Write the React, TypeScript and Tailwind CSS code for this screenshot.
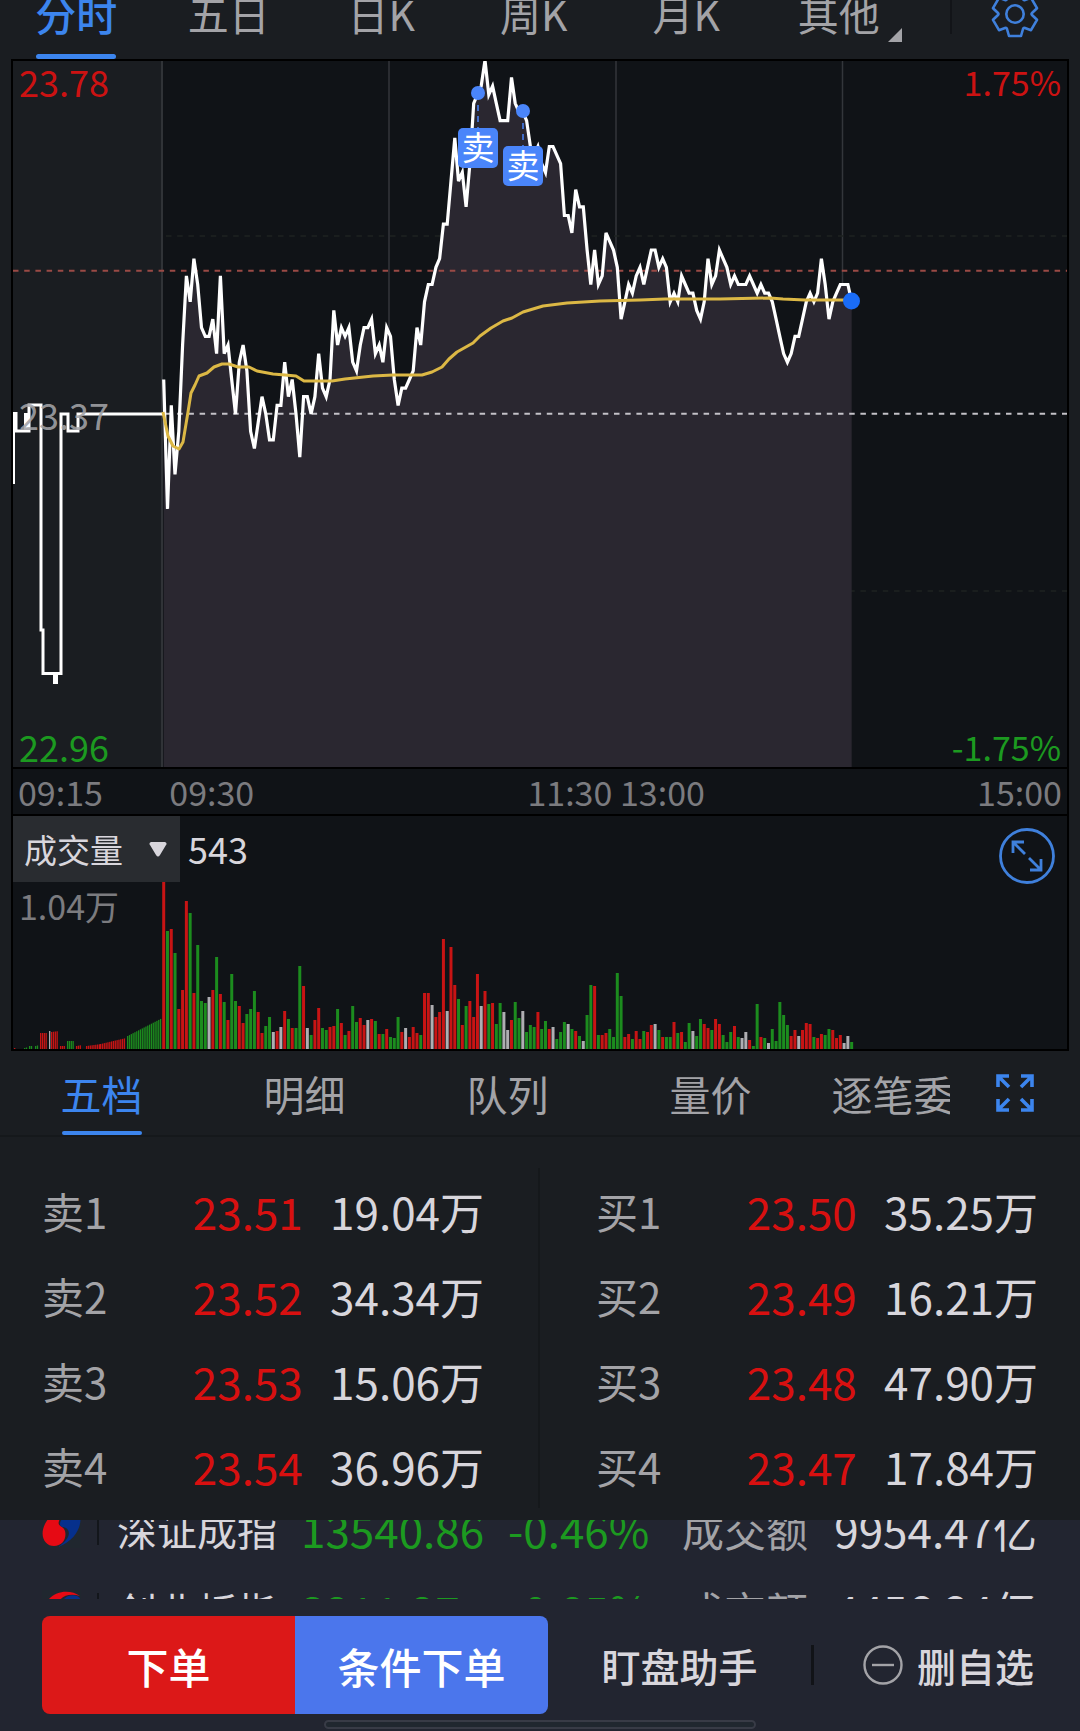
import { useState } from "react";
import clsx from "clsx";

const OPEN_X = 163.7;
const MINUTE = 3.78;
const BASE_Y = 414;
const TICK = 8.63;

// Price per minute since 09:30, in ticks of 0.01 from yesterday's close (23.37)
const ticks = [
	4, -11, 1, -7, -2, 8, 16, 13, 18, 15, 10, 9, 9, 11, 7, 16, 7, 8, 4, 0,
	6, 8, 5, -2, -4, -1, 2, 0, -3, -3, 1, 1, 6, 2, 4, 0, -5, 2, 2, 0,
	2, 7, 3, 2, 4, 12, 8, 10, 9, 10, 6, 5, 8, 10, 10, 11, 7, 8, 6, 10,
	9, 4, 1, 3, 3, 4, 5, 10, 8, 13, 15, 15, 17, 18, 22, 22, 27, 32, 27, 28,
	24, 29, 36, 37, 38, 41, 37, 38, 36, 34, 34, 34, 39, 36, 35, 35, 34, 31, 30, 31,
	29, 28, 31, 31, 30, 29, 23, 23, 21, 26, 24, 24, 19, 15, 19, 15, 16, 21, 20, 19,
	17, 11, 13, 15, 14, 16, 17, 15, 17, 19, 19, 17, 18, 17, 13, 14, 13, 16, 15, 14,
	14, 12, 11, 13, 18, 15, 16, 19, 18, 17, 15, 16, 15, 15, 15, 16, 15, 14, 15, 14,
	14, 13, 11, 9, 7, 6, 7, 9, 9, 11, 13, 14, 13, 14, 18, 15, 11, 13, 14, 15,
	15, 15, 13,
];

// Volume per minute: r = up, g = down, w = flat
const volumes =
	"r167 g118 r120 g96 r40 r59 r148 g136 r56 g104 g48 g46 w52 r59 g92 r55 g47 r29 g75 g48 " +
	"r43 r26 g35 g40 g58 r37 r16 g23 g32 w17 r18 w22 r38 g30 r21 g21 g83 r63 w21 g14 " +
	"r29 r41 g21 g19 r22 r23 g40 r26 g14 r18 g43 g27 r31 r24 w29 r30 g28 r15 g15 r20 " +
	"g12 g11 g32 r17 w21 r12 r22 r16 g14 r56 r56 w44 r32 r37 r110 w38 r102 r64 g50 r24 " +
	"g43 r48 r32 r75 w43 r58 g45 r46 g25 g46 w37 w19 r29 g47 g31 w38 g17 g24 g22 r37 " +
	"g20 g28 r20 w22 g10 g17 g27 w25 g20 r18 g13 w8 g34 g64 r63 g14 r14 r16 g20 g12 " +
	"g76 g53 r12 r15 g10 r18 r10 g18 r17 r24 w25 g19 r12 g12 g12 r27 g16 r17 g7 g26 " +
	"w18 g13 g30 r25 r21 g19 r30 r25 g14 g7 g17 r23 g12 w11 w17 r9 g3 g45 r12 g11 " +
	"w6 g20 g8 g47 g34 g24 r13 r19 w13 r19 r26 r25 g12 r11 r15 g14 g20 r19 r11 r14 " +
	"w6 w13 g7";

const barColors: Record<string, string> = {
	r: "#c81414",
	g: "#1c8c1e",
	w: "#aeaeb2",
};

// Call auction volume, drawn as runs of thin bars
const auctionRuns = [
	{ from: 14, to: 16, start: 1, end: 1, tone: "r" },
	{ from: 24, to: 28, start: 1, end: 2, tone: "g" },
	{ from: 29, to: 33, start: 3, end: 3, tone: "g" },
	{ from: 35, to: 39, start: 3, end: 4, tone: "g" },
	{ from: 40, to: 48, start: 16, end: 16, tone: "r" },
	{ from: 49, to: 50, start: 18, end: 18, tone: "w" },
	{ from: 51, to: 59, start: 17, end: 18, tone: "r" },
	{ from: 60, to: 66, start: 3, end: 3, tone: "r" },
	{ from: 67, to: 75, start: 8, end: 8, tone: "g" },
	{ from: 76, to: 82, start: 3, end: 4, tone: "r" },
	{ from: 86, to: 100, start: 3, end: 5, tone: "r" },
	{ from: 100, to: 126, start: 5, end: 11, tone: "r" },
	{ from: 127, to: 162, start: 13, end: 31, tone: "g" },
];

const pricePoints = ticks.map(
	(t, i) => `${(OPEN_X + i * MINUTE).toFixed(1)},${(BASE_Y - t * TICK).toFixed(1)}`,
);

const averagePoints =
	"163,412 168,436 173,446 179,449 183,442 188,412 191,393 195,385 199,376 207,373 214,367 222,364 229,364 238,367 249,367 257,371 273,374 285,375 296,376 304,381 318,381 332,381 345,379 373,376 393,375 422,375 432,372 442,367 449,359 457,352 473,343 480,336 491,328 503,321 512,318 523,312 543,306 567,303 600,301 640,300 665,299 720,299 770,298 783,299 805,300 851,300";

const marks = [
	{ x: 478, y: 93 },
	{ x: 523, y: 111 },
];

const periods = ["分时", "五日", "日K", "周K", "月K", "其他"];
const bookTabs = ["五档", "明细", "队列", "量价", "逐笔委托"];

type Quote = [label: string, price: string, volume: string];

const asks: Quote[] = [
	["卖1", "23.51", "19.04万"],
	["卖2", "23.52", "34.34万"],
	["卖3", "23.53", "15.06万"],
	["卖4", "23.54", "36.96万"],
];

const bids: Quote[] = [
	["买1", "23.50", "35.25万"],
	["买2", "23.49", "16.21万"],
	["买3", "23.48", "47.90万"],
	["买4", "23.47", "17.84万"],
];

const indices = [
	{ name: "深证成指", value: "13540.86", change: "-0.46%", amount: "9954.47亿" },
	{ name: "创业板指", value: "3211.27", change: "-0.85%", amount: "4456.24亿" },
];

function GearIcon() {
	return (
		<svg viewBox="-25 -25 50 50" className="size-[50px]" fill="none" stroke="#3f80dc" strokeWidth="2.600" strokeLinejoin="round">
			<path d="M6 22H-6L-8 15Q-8.500 13.500-10 14L-16 16.200-22 5.800-17 1Q-16 0-17-1L-22-5.800-16-16.200-10-14Q-8.500-13.500-8-15L-6-22H6L8-15Q8.500-13.500 10-14L16-16.200 22-5.800 17-1Q16 0 17 1L22 5.800 16 16.200 10 14Q8.500 13.500 8 15Z" />
			<circle r="8.700" />
		</svg>
	);
}

function ExpandIcon() {
	return (
		<svg viewBox="0 0 38 38" className="size-[38px]" fill="none" stroke="#3c85ee" strokeWidth="3.600">
			<path d="M2 13V2H13M2 2l11 11M25 2h11V13M36 2L25 13M2 25v11H13M2 36l11-11M36 25v11H25M36 36L25 25" />
		</svg>
	);
}

function ExchangeLogo() {
	return (
		<svg viewBox="0 0 39 39" className="size-[39px] bg-[#20272f]">
			<path fill="#e60a14" d="M38 6C28-1 10 0 3 15C-3 27 3 37 12 37C20 37 25 30 23 22C21 16 15 18 17 12C19 6 28 3 38 6Z" />
			<path fill="#06308c" d="M22 9C28 3 38 5 38.500 10C38.500 20 32 32 16 38C24 33 29 26 26 21C23 16 18 20 18 15C18 12 20 10 22 9Z" />
		</svg>
	);
}

function PeriodTabs() {
	const [active, setActive] = useState("分时");

	return (
		<div className="flex h-[59px] overflow-hidden">
			<nav className="-mt-[17px] grid w-[85%] grid-cols-6 pr-[3px]">
				{periods.map((p) => (
					<button
						key={p}
						type="button"
						onClick={() => setActive(p)}
						className={clsx(
							"relative flex flex-col items-center text-[41px] leading-[60px]",
							p === active ? "font-medium text-[#3c85ee]" : "text-[#a3a3a7]",
						)}
					>
						{p}
						{p === active && <span className="mt-[11px] h-[5px] w-[80px] rounded-sm bg-[#3c85ee]" />}
						{p === "其他" && (
							<svg viewBox="0 0 14 14" className="absolute right-[13px] top-[45px] size-[14px]">
								<path d="M14 0V14H0Z" fill="#a3a3a7" />
							</svg>
						)}
					</button>
				))}
			</nav>
			<div className="flex flex-1 justify-between pl-[32px] pr-[40px]">
				<span className="h-[34px] w-[2px] bg-[#121418]" />
				<button type="button" aria-label="设置" className="-mt-[11px] h-[50px]">
					<GearIcon />
				</button>
			</div>
		</div>
	);
}

function PriceChart() {
	return (
		<div className="relative border-2 border-black bg-[#101317]">
			<svg viewBox="13 61 1054 706" className="block w-full">
				<rect x="13" y="61" width="149" height="706" fill="#1a1d21" />
				<path d="M389 61V767M616 61V767M842.500 61V767" stroke="#33363b" strokeWidth="1.500" />
				<path d="M162 61V767" stroke="#303337" strokeWidth="2" />
				<path d="M166 236H1067M166 591H1067" stroke="#1e2322" strokeWidth="1.500" strokeDasharray="5.500 5.700" />
				<polygon points={`${OPEN_X},767 ${pricePoints.join(" ")} 851.700,767`} fill="#2a2730" />
				<path d="M13 270.700H1067" stroke="#9a4a45" strokeWidth="2" strokeDasharray="5.500 5.700" />
				<path d="M166 413.700H1067" stroke="#c4c2c8" strokeWidth="2" strokeDasharray="5.500 5.700" />

				{/* Call auction */}
				<g fill="none" stroke="#fff" strokeWidth="3">
					<path d="M13.500 412V484M14 431H29V405H41V630H43V673.500H61V414H68V431H78V414H163" />
					<path d="M15 412V432M26.500 413V432M55.500 673V684" strokeWidth="5" />
				</g>

				<polyline points={pricePoints.join(" ")} fill="none" stroke="#fff" strokeWidth="3.200" />
				<polyline points={averagePoints} fill="none" stroke="#dcb845" strokeWidth="3" strokeLinejoin="round" />
				<circle cx="851.500" cy="301" r="8.500" fill="#1a6cf6" />

				{marks.map((m) => (
					<g key={m.x}>
						<path d={`M${m.x} ${m.y + 12}v24`} stroke="#4a85fa" strokeWidth="1.500" strokeDasharray="6 5" />
						<circle cx={m.x} cy={m.y} r="7" fill="#4a85fa" />
						<rect x={m.x - 20} y={m.y + 35} width="40" height="40" rx="5" fill="#4a85fa" />
						<text x={m.x} y={m.y + 67} textAnchor="middle" fontSize="33" fill="#fff">
							卖
						</text>
					</g>
				))}
			</svg>
			<span className="absolute left-[6px] top-0 text-[36px] leading-[40px] text-[#cc1212]">23.78</span>
			<span className="absolute right-[6px] top-0 text-[34px] leading-[42px] text-[#cc1212]">1.75%</span>
			<span className="absolute left-[6px] top-[47%] text-[36px] leading-[42px] text-[#a3a3a7]/90">23.37</span>
			<span className="absolute bottom-0 left-[6px] text-[36px] leading-[42px] text-[#1c9a20]">22.96</span>
			<span className="absolute bottom-0 right-[6px] text-[34px] leading-[40px] text-[#1c9a20]">-1.75%</span>
		</div>
	);
}

function TimeAxis() {
	return (
		<div className="grid h-[45px] grid-cols-[151fr_250fr_392fr_249fr] border-x-2 border-black bg-[#101317] px-[5px] text-[34px] leading-[46px] text-[#7b7b7f]">
			<span>09:15</span>
			<span>09:30</span>
			<span className="text-center">11:30 13:00</span>
			<span className="text-right">15:00</span>
		</div>
	);
}

function VolumeChart() {
	return (
		<div className="relative border-2 border-black bg-[#101317]">
			<div className="flex h-[66px] text-[#d8d6dc]">
				<button type="button" className="flex h-full w-[167px] items-center justify-between bg-[#292c30] pl-[11px] pr-[13px] text-[33px] leading-[60px]">
					成交量
					<svg viewBox="0 0 18 16" className="w-[18px]">
						<path d="M2 1H16Q18.500 2 17 4L11 14Q9 17 7 14L1 4Q-.5 2 2 1Z" fill="currentColor" />
					</svg>
				</button>
				<span className="pl-[8px] text-[36px] leading-[64px]">543</span>
			</div>
			<svg viewBox="13 0 1054 167" className="block w-full">
				{auctionRuns.map((run) => {
					const count = Math.max(1, Math.round((run.to - run.from) / 1.83));
					return Array.from({ length: count }, (_, i) => {
						const h = run.start + ((run.end - run.start) * i) / count;
						return (
							<rect key={`${run.from}-${i}`} x={run.from + i * 1.83} y={167 - h} width="1.300" height={h} fill={barColors[run.tone]} />
						);
					});
				})}
				{volumes.split(" ").map((v, i) => {
					const h = Number(v.slice(1));
					return <rect key={i} x={OPEN_X + i * MINUTE - 1.5} y={167 - h} width="3" height={h} fill={barColors[v[0]]} />;
				})}
			</svg>
			<span className="absolute left-[6px] top-[66px] text-[34px] leading-[48px] text-[#7b7b7f]">1.04万</span>
			<button type="button" aria-label="放大" className="absolute right-[12px] top-[12px]">
				<svg viewBox="0 0 56 56" className="size-[56px]" fill="none" stroke="#3f80dc" strokeWidth="2.800">
					<circle cx="28" cy="28" r="26.500" />
					<path d="M14 25V14H25M14 14L26 26M42 31V42H31M42 42L30 30" />
				</svg>
			</button>
		</div>
	);
}

function QuoteTable({ rows, label, className }: { rows: Quote[]; label: string; className: string }) {
	return (
		<div className={clsx("flex-1", className)}>
			<table aria-label={label} className="w-full table-fixed">
				<tbody>
					{rows.map(([name, price, volume]) => (
						<tr key={name} className="h-[85px] text-[44px] leading-[60px]">
							<th scope="row" className="w-[22%] text-left text-[42px] font-normal text-[#a3a3a7]">
								{name}
							</th>
							<td className="text-right text-[#d81010]">{price}</td>
							<td className="w-[41%] text-right text-[#d8d6dc]">{volume}</td>
						</tr>
					))}
				</tbody>
			</table>
		</div>
	);
}

function OrderBook() {
	const [active, setActive] = useState("五档");

	return (
		<section>
			<div className="flex h-[86px] border-b-2 border-[#15181b]">
				<div className="flex w-[88%] overflow-hidden">
					{bookTabs.map((t) => (
						<button
							key={t}
							type="button"
							onClick={() => setActive(t)}
							className={clsx(
								"flex w-[203px] shrink-0 flex-col items-center justify-between pt-[12px] text-[41px] leading-[60px]",
								t === active ? "text-[#3c85ee]" : "text-[#a3a3a7]",
							)}
						>
							{t}
							{t === active && <span className="h-[4px] w-[80px] rounded-sm bg-[#3c85ee]" />}
						</button>
					))}
				</div>
				<button type="button" aria-label="全屏" className="flex flex-1 items-center justify-center">
					<ExpandIcon />
				</button>
			</div>
			<div className="flex pb-[12px] pt-[31px]">
				<QuoteTable rows={asks} label="卖盘" className="border-r-2 border-[#15181b] pl-[42px] pr-[54px]" />
				<QuoteTable rows={bids} label="买盘" className="pl-[56px] pr-[42px]" />
			</div>
		</section>
	);
}

function IndexTicker() {
	return (
		<section className="h-[79px] overflow-hidden">
			<div className="-mt-[32px]">
				{indices.map((idx) => (
					<div key={idx.name} className="flex h-[81px] items-center pl-[42px] pr-[43px] text-[44px] leading-[60px]">
						<ExchangeLogo />
						<span className="ml-[16px] mr-[18px] h-[33px] w-[2px] bg-[#13161b]" />
						<span className="text-[40px] text-[#d8d6dc]">{idx.name}</span>
						<span className="w-[207px] pl-[24px] text-[#1c9a20]">{idx.value}</span>
						<span className="w-[198px] pl-[24px] text-[#1c9a20]">{idx.change}</span>
						<span className="text-[42px] text-[#a3a3a7]">成交额</span>
						<span className="ml-auto text-[#d8d6dc]">{idx.amount}</span>
					</div>
				))}
			</div>
		</section>
	);
}

function ActionBar() {
	return (
		<footer className="pb-[2px] pt-[17px] font-medium">
			<div className="flex h-[98px] items-center pl-[42px] pr-[46px]">
				<div className="flex h-full w-[51%] overflow-hidden rounded-[8px] text-[42px] text-white">
					<button type="button" className="flex-1 bg-[#dc1818]">
						下单
					</button>
					<button type="button" className="flex-1 bg-[#4b76ec]">
						条件下单
					</button>
				</div>
				<button type="button" className="flex-1 text-[39px] text-[#d8d6dc]">
					盯盘助手
				</button>
				<span className="h-[40px] w-[3px] bg-[#111317]" />
				<button type="button" className="flex items-center gap-[14px] pl-[49px] text-[39px] text-[#d8d6dc]">
					<svg viewBox="0 0 40 40" className="size-[40px]" fill="none" stroke="#a3a3a7" strokeWidth="2.400">
						<circle cx="20" cy="20" r="18.500" />
						<path d="M9 20H31" />
					</svg>
					删自选
				</button>
			</div>
			<div className="mx-auto mt-[6px] h-[9px] w-[40%] rounded-full border-2 border-[#383b46] bg-[#20272f]" />
		</footer>
	);
}

export default function App() {
	return (
		<main className="min-h-screen overflow-hidden bg-[#1a1d21] font-['Noto_Sans_CJK_SC',sans-serif]">
			<PeriodTabs />
			<section className="mx-[11px]">
				<PriceChart />
				<TimeAxis />
				<VolumeChart />
			</section>
			<OrderBook />
			<div className="bg-[#222530]">
				<IndexTicker />
				<ActionBar />
			</div>
		</main>
	);
}
